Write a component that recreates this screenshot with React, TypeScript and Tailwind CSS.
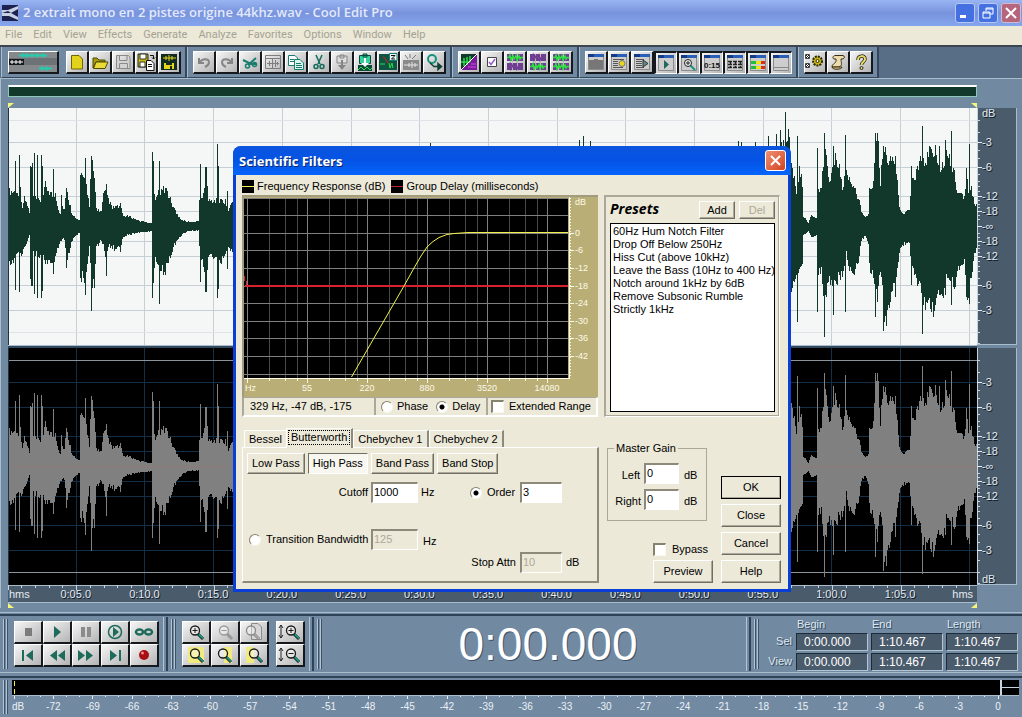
import { useState } from "react";
import type { ReactNode } from "react";
import { twMerge } from "tailwind-merge";

type Point = [number, number, number];

// x, height above the centre, height below the centre
const envelope: Point[] = [
  [0, 2, 2], [1, 36, 37], [5, 36, 36], [8, 33, 27], [12, 38, 30], [14, 20, 28],
  [16, 28, 22], [19, 22, 15], [21, 13, 8], [22, 60, 54], [24, 60, 56], [25, 30, 26],
  [28, 26, 28], [34, 26, 30], [37, 42, 35], [42, 35, 36], [45, 30, 40], [47, 34, 30],
  [50, 17, 22], [52, 14, 15], [54, 20, 12], [56, 18, 15], [58, 36, 33], [60, 30, 30],
  [63, 15, 15], [67, 8, 9], [71, 6, 7], [72, 49, 52], [75, 50, 52], [77, 60, 54],
  [79, 36, 40], [81, 20, 18], [83, 68, 56], [86, 50, 58], [88, 18, 20], [93, 15, 14],
  [95, 32, 20], [98, 36, 32], [100, 28, 20], [104, 18, 20], [107, 20, 25], [112, 20, 20],
  [115, 10, 10], [120, 10, 8], [132, 5, 6], [143, 3, 4], [144, 60, 50], [146, 36, 40],
  [147, 30, 32], [152, 36, 42], [157, 40, 46], [160, 32, 35], [164, 22, 24], [168, 13, 15],
  [174, 6, 7], [181, 4, 4], [190, 5, 4], [191, 25, 20], [192, 40, 45], [194, 26, 30],
  [198, 57, 60], [200, 26, 30], [206, 26, 30], [212, 26, 36], [217, 26, 30], [220, 16, 20],
  [224, 25, 25], [228, 18, 28],
  [260, 40, 44], [330, 12, 14], [345, 50, 50], [420, 45, 50], [500, 20, 22], [560, 60, 58],
  [620, 40, 42], [700, 55, 50], [760, 65, 60], [776, 90, 84], [781, 84, 64],
  [785, 50, 57], [788, 38, 45], [791, 56, 50], [794, 45, 38], [795, 10, 8], [800, 3, 4],
  [803, 11, 11], [808, 8, 8], [809, 40, 48], [813, 38, 45], [816, 80, 80], [818, 75, 75],
  [820, 46, 55], [822, 54, 62], [826, 70, 62], [831, 62, 50], [834, 42, 48], [838, 54, 28],
  [843, 42, 52], [848, 34, 42], [851, 26, 30], [853, 14, 14], [857, 9, 9], [860, 12, 16],
  [861, 38, 42], [865, 42, 50], [867, 92, 70], [870, 80, 60], [872, 44, 46], [874, 78, 60],
  [877, 78, 105], [880, 68, 88], [882, 66, 64], [886, 64, 56], [889, 46, 44], [891, 20, 24],
  [894, 12, 18], [901, 16, 16], [903, 50, 38], [907, 48, 48], [911, 66, 62], [914, 70, 72],
  [917, 70, 80], [921, 75, 78], [926, 80, 86], [929, 72, 70], [931, 56, 62], [935, 64, 66],
  [938, 74, 50], [942, 64, 58], [946, 54, 62], [949, 34, 44], [954, 32, 40], [956, 28, 36],
  [958, 56, 70], [960, 36, 68], [963, 40, 56], [966, 24, 30], [969, 20, 20],
];

const spikes: Point[] = [
  [7, 65, 63], [11, 71, 65], [26, 73, 67], [29, 71, 71], [33, 71, 71], [34, 60, 64],
  [45, 57, 47], [53, 31, 14], [58, 38, 41], [77, 68, 68], [83, 70, 84], [98, 42, 49],
  [112, 23, 25], [144, 74, 71], [145, 65, 56], [151, 65, 77], [192, 62, 55],
  [197, 59, 65], [198, 59, 65], [209, 82, 71], [210, 60, 62], [219, 35, 42],
  [422, 83, 70], [571, 86, 80], [575, 90, 80],
  [582, 85, 75], [730, 85, 80], [733, 84, 80], [747, 84, 80], [760, 90, 80], [768, 92, 80],
  [772, 96, 84], [777, 114, 80], [780, 97, 80], [789, 90, 95], [809, 78, 85], [816, 93, 110],
  [825, 80, 88], [837, 91, 85], [867, 93, 90], [869, 93, 75], [875, 80, 104], [882, 70, 75],
  [887, 70, 70], [903, 60, 58], [914, 100, 107], [931, 80, 68], [937, 86, 68], [943, 95, 78],
  [961, 82, 77],
];

function wavePath() {
  let d = "";
  let seg = 0;
  for (let x = 0; x < 969; x++) {
    while (seg < envelope.length - 2 && envelope[seg + 1][0] <= x) seg++;
    const [x0, u0, l0] = envelope[seg];
    const [x1, u1, l1] = envelope[seg + 1];
    const t = (x - x0) / (x1 - x0);
    const noise = Math.abs(Math.sin(x * 12.9898) * 43758.5453) % 1;
    const noise2 = Math.abs(Math.sin(x * 78.233) * 12543.123) % 1;
    let up = (u0 + (u1 - u0) * t) * (0.84 + noise * 0.24);
    let low = (l0 + (l1 - l0) * t) * (0.84 + noise2 * 0.24);
    const spike = spikes.find((s) => s[0] === x);
    if (spike) {
      up = spike[1];
      low = spike[2];
    }
    d += `M${x + 0.5} ${Math.round(118 - up)}V${Math.round(119 + low)}`;
  }
  return d;
}

const wave = wavePath();
const dbLines = [34, 59, 88, 103, 133, 148, 177, 202];
const dbMarks: [number, string][] = [
  [34, "-3"], [59, "-6"], [88, "-12"], [103, "-18"], [118, "-∞"],
  [133, "-18"], [148, "-12"], [177, "-6"], [202, "-3"],
];
const minorDb = [12, 24, 42, 50, 66, 73, 78, 83, 92, 96, 99, 107, 111, 125, 129, 137, 140, 144, 153, 158, 163, 170, 186, 194, 212, 224, 235];

const Channel = ({ dark }: { dark?: boolean }) => (
  <div className="flex">
    <svg
      viewBox="0 0 969 237"
      preserveAspectRatio="none"
      shapeRendering="crispEdges"
      className={twMerge("h-[237px] min-w-0 flex-1 bg-[#f5f7f7]", dark && "bg-black")}
    >
      <g stroke={dark ? "#122f47" : "#c6cfd5"}>
        {Array.from({ length: 14 }, (_, i) => (
          <path key={i} d={`M${Math.round((i + 1) * 68.7) - 0.5} 0V237`} />
        ))}
        {dbLines.map((y) => (
          <path key={y} d={`M0 ${y + 0.5}H969`} />
        ))}
      </g>
      <path d="M0 12.5H969M0 224.5H969" stroke={dark ? "#8b949c" : "#dde3e6"} />
      <path d={wave} stroke={dark ? "#808080" : "#12372b"} />
      {dark && <path d="M0 118.5H969" stroke="#8c7b79" />}
      <path d="M0.5 0V237" stroke="#1c3444" />
    </svg>
    <svg width="40" height="237" className="border-r border-b border-[#a9bccb] bg-[#4a5b6c]" shapeRendering="crispEdges">
      <path d="M0.5 0V237" stroke="#c6d4df" />
      {minorDb.map((y) => (
        <path key={y} d={`M0 ${y + 0.5}H3`} stroke="#c6d4df" />
      ))}
      <g className="font-['Liberation_Sans'] text-[11px]">
        {dbMarks.map(([y, label]) => (
          <g key={y}>
            <path d={`M0 ${y + 0.5}H5`} stroke="#e6eef4" />
            <text x="6" y={y + 5} fill="#10171e">{label}</text>
            <text x="5" y={y + 4} fill="#e2ebf2">{label}</text>
          </g>
        ))}
        <text x="6" y={dark ? 236 : 10} fill="#10171e">dB</text>
        <text x="5" y={dark ? 235 : 9} fill="#e2ebf2">dB</text>
      </g>
    </svg>
  </div>
);

const Flag = ({ d }: { d: string }) => (
  <svg width="6" height="5" viewBox="0 0 6 5">
    <path d={d} fill="#f6f67a" />
  </svg>
);

const arrowHead = <path d="M5 2V14L12 8Z" fill="#1f6b5b" />;

const grid = (top: string, bottom: string) => (
  <>
    <path d="M0 0H16V7H0ZM0 9H16V16H0Z" fill="#6f3f92" />
    <path d="M0 3.500H16M0 12.500H16M5.500 0V16M10.500 0V16" stroke="#b9b9b9" />
    <path d="M0 3.500H2L3 1L4 6L6 2L7 5L9 1.500L10 6L12 2L13 5L14 3.500H16" fill="none" stroke={top} strokeWidth="1.500" />
    <path d="M0 12.500H2L3 10L4 15L6 11L7 14L9 10.500L10 15L12 11L13 14L14 12.500H16" fill="none" stroke={bottom} strokeWidth="1.500" />
  </>
);

const pane = (content: ReactNode) => (
  <>
    <path d="M0.500 1.500H15.500V15.500H0.500Z" fill="#cdcdcd" stroke="#8b8b8b" />
    <path d="M0 0H16V3H0Z" fill="#2a5fb8" />
    <path d="M0 0H6V3H0Z" fill="#123a86" />
    {content}
  </>
);

const icons: Record<string, ReactNode> = {
  New: <path d="M2.500 1.500H10L13.500 5V15H2.500Z" fill="#e3d21c" stroke="#6f6600" />,
  Open: (
    <>
      <path d="M1 4H5L7 6H13V8H4L1 14Z" fill="#a89a10" stroke="#4f4a00" />
      <path d="M4 8H16L13 14.500H1.500Z" fill="#eadb38" stroke="#4f4a00" />
    </>
  ),
  Save: (
    <path d="M1.500 1.500H13.500L15 3V14.500H1.500ZM4.500 1.500V6.500H12V1.500M4.500 14.500V9.500H12.500V14.500" fill="#d3d3d3" stroke="#8a8a8a" />
  ),
  "Save As": (
    <>
      <path d="M0 0H10V13H0Z" fill="#c9bb14" stroke="#222" />
      <path d="M2 0H8V5H2ZM2 8H7V13H2Z" fill="#fff" stroke="#333" />
      <path d="M8.500 6.500H13L16 9.500V16.500H8.500Z" fill="#fff" stroke="#111" />
      <path d="M10 10.500H14M10 12.500H14M12 1.500H15.500V5M14 3.500L15.500 5L17 3.500" fill="none" stroke="#111" />
    </>
  ),
  "Save Selection": (
    <>
      <path d="M0 0H16V16H0Z" fill="#132c22" />
      <path d="M2 4H15M5 2V6M8 1V7M11 2V6" stroke="#e6d61e" />
      <path d="M3 9H13V15H3Z" fill="#e6d61e" />
      <path d="M5 9H11V11H5ZM9 12H11V15H9Z" fill="#132c22" />
    </>
  ),
  Undo: <path d="M3 4V9H8M3.500 8.500C6 4 13 4 13 8.500C13 11 11 12 9 13" fill="none" stroke="#858585" strokeWidth="2" />,
  Redo: <path d="M13 4V9H8M12.500 8.500C10 4 3 4 3 8.500C3 11 5 12 7 13" fill="none" stroke="#858585" strokeWidth="2" />,
  Trim: (
    <g fill="none" stroke="#187d6c" strokeWidth="1.500">
      <path d="M1 6L9 10H14M14 4L6 11" strokeWidth="2" />
      <circle cx="12.500" cy="10.500" r="2" />
      <circle cx="5.500" cy="12" r="2" />
    </g>
  ),
  "Adjust Sample": (
    <path d="M0.500 1.500H15.500V14.500H0.500ZM0 4.500H16M2 9.500H14M4.500 7V12M7.500 5V14M10.500 6V13M12.500 8V11" fill="none" stroke="#7d7d7d" />
  ),
  Copy: (
    <>
      <path d="M0.500 1.500H7L9.500 4V11.500H0.500Z" fill="#fff" stroke="#187d6c" />
      <path d="M6.500 5.500H12L15.500 9V15.500H6.500Z" fill="#dff3ee" stroke="#187d6c" />
      <path d="M2 5.500H6M2 7.500H6M8 9.500H13M8 11.500H14M8 13.500H14" stroke="#187d6c" />
    </>
  ),
  Cut: (
    <g fill="none" stroke="#14695a" strokeWidth="1.500">
      <path d="M5 1L9 10M11 1L7 10" />
      <circle cx="5" cy="12.500" r="2" />
      <circle cx="11" cy="12.500" r="2" />
    </g>
  ),
  Paste: (
    <>
      <path d="M3 2H13V9H3ZM6 1H10V4H6Z" fill="#ddd" stroke="#858585" />
      <path d="M7 6H9V11H12L8 16L4 11H7Z" fill="#858585" />
    </>
  ),
  "Mix Paste": (
    <>
      <path d="M2.500 1.500H13.500V9.500H2.500ZM6 0H10V3H6Z" fill="#35d39b" stroke="#0b4b3c" />
      <path d="M1 11H15V17H1Z" fill="#0b4b3c" />
      <path d="M7 4H9V9H12L8 13L4 9H7Z" fill="#fff" />
      <path d="M1 16L4 13L7 16L10 13L13 16L15 14" stroke="#2bdc4f" fill="none" />
    </>
  ),
  "Zero Cross": (
    <>
      <path d="M-1 0H17V16H-1Z" fill="#0f5541" />
      <path d="M9.500 -0.500H17V6.500H9.500Z" fill="#e9f5f3" stroke="#187d6c" />
      <path d="M11 1.500H15L11.500 5H15" stroke="#111" fill="none" />
      <path d="M0 10H5M9 9L10 14L12 9L13 14" stroke="#26e04a" fill="none" />
      <path d="M3 3C6 3 6 9 9 9" stroke="#e02222" fill="none" />
    </>
  ),
  Delete: (
    <>
      <path d="M0 6H16V16H0Z" fill="#8a8a8a" />
      <path d="M1 11H15M6 9V13M9 8V14M12 9V13" stroke="#e5e5e5" />
      <path d="M5 5L2 1M7 4V0M9 5L13 1" stroke="#777" />
    </>
  ),
  Quick: (
    <>
      <circle cx="6" cy="5" r="4" fill="none" stroke="#18927c" strokeWidth="2" />
      <path d="M4 9L8 12.500M7 12.500H14M12 9.500L15.500 12.500L12 15.500Z" stroke="#143f36" strokeWidth="1.500" fill="#143f36" />
    </>
  ),
  Spectral: (
    <>
      <path d="M0 0H16V16H0Z" fill="#7a1c9a" />
      <path d="M0 0H16L0 16Z" fill="#123a2c" />
      <path d="M0 8H9M3 4V12M6 3V11M9 2V8" stroke="#2be04a" strokeWidth="1.500" />
      <path d="M0 16L16 0" stroke="#fff" />
      <path d="M7 13H15M10 10H15" stroke="#d64be6" />
    </>
  ),
  Check: (
    <>
      <path d="M3.500 3.500H12.500V12.500H3.500Z" fill="#fff" stroke="#444" />
      <path d="M5 8L7 10.500L11 5" fill="none" stroke="#9a5ad0" strokeWidth="1.500" />
    </>
  ),
  "Edit Both": grid("#27e03c", "#6f3f92"),
  "Edit Left": grid("#6f3f92", "#27e03c"),
  "Edit Right": grid("#27e03c", "#27e03c"),
  Organizer: pane(<path d="M1 6H6V5H10V6H15V15H1Z" fill="#777" />),
  "Cue List": pane(
    <>
      <path d="M2 5.500H13M2 7.500H7M2 9.500H7M2 11.500H7M2 13.500H12" stroke="#555" />
      <circle cx="11" cy="9.500" r="3" fill="#e6d61e" stroke="#777" />
    </>,
  ),
  "Play List": pane(
    <>
      <path d="M2 5.500H10M2 7.500H8M2 9.500H8M2 11.500H8M2 13.500H10" stroke="#555" />
      <path d="M9 6V13L14 9.500Z" fill="#5e8f8b" stroke="#333" />
    </>,
  ),
  Transport: pane(<path d="M6 5V14L11 9.500Z" fill="#1f6b5b" />),
  "Zoom Bar": pane(
    <>
      <path d="M9 10L14 15" stroke="#18927c" strokeWidth="2" />
      <circle cx="7" cy="8" r="3.500" fill="#eee" stroke="#222" />
      <path d="M5 8H9M7 6V10" stroke="#222" />
    </>,
  ),
  "Time Window": pane(
    <text x="8" y="13" textAnchor="middle" fontSize="8" fontWeight="700" fill="#111">0:15</text>,
  ),
  "Selection Window": pane(
    <path d="M1 6.500H15M1 9.500H15M1 12.500H15M3.500 6V13M8.500 6V13M13.500 6V13" fill="none" stroke="#222" strokeWidth="1.500" strokeDasharray="4 1" />,
  ),
  "Level Window": pane(
    <>
      <path d="M1 6H6V9H1ZM1 11H6V14H1Z" fill="#1ebf3b" />
      <path d="M6 6H11V9H6ZM6 11H11V14H6Z" fill="#efe21a" />
      <path d="M11 6H15V9H11ZM11 11H15V14H11Z" fill="#e02b1c" />
    </>,
  ),
  "Status Bar": pane(<path d="M0 12.500H16" stroke="#888" />),
  Settings: (
    <>
      <path d="M-1.500 0.500H2.500V4.500H-1.500ZM-1.500 9.500H2.500V13.500H-1.500Z" fill="#fff" stroke="#444" />
      <path d="M-1 1L2 4M2 1L-1 4M-1 10L2 13M2 10L-1 13" stroke="#222" />
      <circle cx="10.500" cy="7" r="4.500" fill="#c9b714" stroke="#2a2600" strokeDasharray="2 1" strokeWidth="2" />
      <circle cx="10.500" cy="7" r="1.500" fill="#fff" stroke="#2a2600" />
    </>
  ),
  Script: (
    <>
      <path d="M5 1.500H13C15 2 15 5 12 5H11C11 9 13 11 9 13H2C2 9 7 10 6 5H4C2 4 3 2 5 1.500Z" fill="#ecdcae" stroke="#3a3018" />
      <path d="M2 13C2 16 12 16 12 13Z" fill="#d6c07c" stroke="#3a3018" />
    </>
  ),
  Help: (
    <>
      <path d="M5 6C5 1 12 1 12 5C12 8 8.500 8 8.500 11" fill="none" stroke="#222" strokeWidth="3.500" />
      <path d="M5 6C5 1 12 1 12 5C12 8 8.500 8 8.500 11" fill="none" stroke="#e8dc66" strokeWidth="2" />
      <circle cx="8.500" cy="14" r="1.500" fill="#e8dc66" stroke="#222" />
    </>
  ),
  Stop: <path d="M5 4H12V12H5Z" fill="#7b7b7b" />,
  Play: arrowHead,
  Pause: <path d="M3 3H7V13H3ZM9 3H13V13H9Z" fill="#8b8b8b" />,
  "Play to End": (
    <>
      <circle cx="8" cy="8" r="6.500" fill="none" stroke="#1f6b5b" strokeWidth="1.500" />
      <path d="M6 3V13L12 8Z" fill="#1f6b5b" />
    </>
  ),
  Loop: (
    <g fill="none" stroke="#1f6b5b" strokeWidth="2.500">
      <ellipse cx="3.500" cy="8" rx="3.500" ry="2.500" />
      <ellipse cx="12.500" cy="8" rx="3.500" ry="2.500" />
    </g>
  ),
  "Go to Start": <path d="M2 3H4V14H2ZM13 3V14L6 8.500Z" fill="#1f6b5b" />,
  Rewind: <path d="M8 3V14L1 8.500ZM16 3V14L9 8.500Z" fill="#1f6b5b" />,
  Forward: <path d="M0 3V14L7 8.500ZM8 3V14L15 8.500Z" fill="#1f6b5b" />,
  "Go to End": <path d="M12 3H14V14H12ZM3 3V14L10 8.500Z" fill="#1f6b5b" />,
  Record: (
    <>
      <circle cx="8" cy="8" r="5" fill="#a80f12" />
      <circle cx="6.500" cy="6" r="1.500" fill="#f08a8a" />
    </>
  ),
};

const lens = (sign: string, ink = "#1a1a1a", handle = "#18927c", shift = 0) => (
  <g transform={`translate(${shift} 0)`}>
    <path d="M10 10L15 15" stroke={ink} strokeWidth="3" />
    <path d="M10.500 10L15 14.500" stroke={handle} strokeWidth="2" />
    <circle cx="7" cy="6.500" r="4.500" fill="#ffffff66" stroke={ink} strokeWidth="1.300" />
    <path d={sign} stroke={ink} fill="none" />
  </g>
);

const plus = "M4.500 6.500H9.500M7 4V9";
const minus = "M4.500 6.500H9.500";
const upDown = <path d="M-1 1V14M-3 4L-1 1L1 4M-3 11L-1 14L1 11" stroke="#222" fill="none" />;

Object.assign(icons, {
  "Zoom In": lens(plus),
  "Zoom Out": lens(minus, "#9a9a9a", "#9a9a9a"),
  "Zoom Full": (
    <>
      <path d="M5.500 -0.500H12L15.500 3V15.500H5.500Z" fill="#d6d6d6" stroke="#8a8a8a" />
      {lens("", "#8a8a8a", "#a5a5a5", -2)}
    </>
  ),
  "Zoom Selection": (
    <>
      <path d="M0 0H16V16H0Z" fill="#f0ea80" />
      {lens("")}
    </>
  ),
  "Zoom Left": (
    <>
      <path d="M7 0H15V16H7Z" fill="#f0ea80" />
      {lens("", "#1a1a1a", "#18927c", -1)}
    </>
  ),
  "Zoom Right": (
    <>
      <path d="M0 0H8V16H0Z" fill="#f0ea80" />
      {lens("", "#1a1a1a", "#18927c", 1)}
    </>
  ),
  "Zoom In Vertically": (
    <>
      {upDown}
      {lens(plus, "#1a1a1a", "#18927c", 2)}
    </>
  ),
  "Zoom Out Vertically": (
    <>
      {upDown}
      {lens(minus, "#1a1a1a", "#18927c", 2)}
    </>
  ),
});

const IconButton = ({ name, wide, pressed }: { name: string; wide?: boolean; pressed?: boolean }) => (
  <button
    type="button"
    aria-label={name}
    className={twMerge(
      "flex h-[23px] w-[23px] items-center justify-center border-t border-l border-r-2 border-b-2 border-t-white border-l-white border-r-[#15191d] border-b-[#15191d] bg-linear-to-br from-[#f6f6f6] to-[#b4b4b4]",
      wide && "w-[29px]",
      pressed && "border-t-2 border-l-2 border-r border-b border-t-[#15191d] border-l-[#15191d] border-r-white border-b-white",
    )}
  >
    <svg width="16" height="16" viewBox="0 0 16 16" className="overflow-visible">
      {icons[name]}
    </svg>
  </button>
);

const toolGroup =
  "flex h-[31px] items-end border-r-2 border-b border-l border-r-[#33485c] border-b-[#33485c] border-l-[#a9bccb] bg-[#7289a2] pr-[4px] pb-[3px] pl-[5px]";

const ToolGroup = ({ names, pressedFrom = 99 }: { names: string[]; pressedFrom?: number }) => (
  <div className={toolGroup}>
    {names.map((name, i) => (
      <IconButton key={name} name={name} pressed={i >= pressedFrom} />
    ))}
  </div>
);

const toolbar = [
  { names: ["Undo", "Redo", "Trim", "Adjust Sample", "Copy", "Cut", "Paste", "Mix Paste", "Zero Cross", "Delete", "Quick"] },
  { names: ["Spectral", "Check", "Edit Both", "Edit Left", "Edit Right"] },
  { names: ["Organizer", "Cue List", "Play List", "Transport", "Zoom Bar", "Time Window", "Selection Window", "Level Window", "Status Bar"], pressedFrom: 3 },
  { names: ["Settings", "Script", "Help"] },
];

const menus = ["File", "Edit", "View", "Effects", "Generate", "Analyze", "Favorites", "Options", "Window", "Help"];

const Grip = () => (
  <div className="flex h-[50px] gap-px">
    <div className="w-[2px] border-r border-[#3d5268] bg-[#b3c4d2]" />
    <div className="w-[2px] border-r border-[#3d5268] bg-[#b3c4d2]" />
  </div>
);

const EndBar = () => (
  <div className="h-[54px] w-[5px] border-r-2 border-l border-r-[#2f4358] border-l-[#b3c4d2] bg-[#7289a2]" />
);

const bevel =
  "border border-t-white border-l-white border-r-[#716f64] border-b-[#716f64] bg-[#ece9d8] shadow-[inset_-1px_-1px_0_#aca899]";

const DialogButton = ({ children, className, disabled }: { children: string; className?: string; disabled?: boolean }) => (
  <button
    type="button"
    disabled={disabled}
    className={twMerge(bevel, "h-[23px] w-[60px] text-center disabled:text-[#aca899]", className)}
  >
    {children}
  </button>
);

const Field = ({ id, value, disabled, className }: { id: string; value: string; disabled?: boolean; className?: string }) => (
  <input
    id={id}
    defaultValue={value}
    disabled={disabled}
    className={twMerge(
      "h-[21px] w-[42px] border-t-2 border-l-2 border-r border-b border-t-[#8d8a7c] border-l-[#8d8a7c] border-r-white border-b-white bg-white pb-[2px] pl-px outline-none disabled:bg-[#ece9d8] disabled:text-[#aca899]",
      className,
    )}
  />
);

const radio =
  "size-[12px] shrink-0 appearance-none rounded-full border border-t-[#85826f] border-l-[#85826f] border-r-[#f8f7f0] border-b-[#f8f7f0] bg-white checked:bg-[radial-gradient(circle,#000_0_2px,#fff_3px)]";
const checkbox =
  "size-[13px] shrink-0 appearance-none border-t-2 border-l-2 border-r border-b border-t-[#85826f] border-l-[#85826f] border-r-[#f8f7f0] border-b-[#f8f7f0] bg-white checked:bg-black";

const majorY: [number, string][] = [
  [38, "0"], [55, "-6"], [73, "-12"], [91, "-18"], [108, "-24"], [126, "-30"], [143, "-36"], [161, "-42"],
];
const majorX: [number, string][] = [
  [5, ""], [65, "55"], [125, "220"], [185, "880"], [245, "3520"], [305, "14080"],
];

const ResponseChart = () => (
  <svg viewBox="0 0 356 202" className="block w-full bg-[#b9ae76]" shapeRendering="crispEdges">
    <path d="M0 1H356M1 0V202" stroke="#a19b80" strokeWidth="2" />
    <path d="M2 3H326V183H2Z" fill="#000" />
    {majorX.map(([x]) =>
      [22, 38, 50].filter((o) => x + o < 326).map((o) => (
        <path key={x + o} d={`M${x + o + 0.5} 3V183`} stroke="#484848" />
      )),
    )}
    <g stroke="#808080">
      <path d="M2 3.500H326M2 20.500H326M2 179.500H326" />
      {majorY.map(([y]) => (
        <path key={y} d={`M2 ${y + 0.5}H326`} />
      ))}
      {majorX.map(([x]) => (
        <path key={x} d={`M${x + 0.5} 3V183`} />
      ))}
    </g>
    <path d="M3 91H326" stroke="#d8202e" strokeWidth="2" />
    <path d="M2.500 81V86M4.500 86V91" stroke="#d8202e" />
    <path
      d="M109.500 182L162 91L172 73L179 61L185 52L191 46.500L197 42.500L205 39.500L212 38.500L226 37.500H326"
      fill="none"
      stroke="#f2f24a"
      shapeRendering="auto"
    />
    <path d="M2 183.500H327.500V2" fill="none" stroke="#fbf8e6" />
    {Array.from({ length: 60 }, (_, i) => (
      <path key={i} d={`M328 ${i * 3 + 3.5}H329`} stroke="#fbf8e6" />
    ))}
    <g fill="#fdfae8" className="font-['Liberation_Sans'] text-[9px]">
      <text x="333" y="10">dB</text>
      {majorY.map(([y, label]) => (
        <g key={y}>
          <path d={`M328 ${y + 0.5}H332`} stroke="#fbf8e6" />
          <text x="333" y={y + 3}>{label}</text>
        </g>
      ))}
      <text x="3" y="196">Hz</text>
      {majorX.map(([x, label]) => (
        <g key={x}>
          <path d={`M${x + 0.5} 184V188`} stroke="#fbf8e6" />
          <text x={x} y="196" textAnchor="middle">{label}</text>
        </g>
      ))}
      {majorX.map(([x]) =>
        [22, 38, 50].filter((o) => x + o < 326).map((o) => (
          <path key={x + o} d={`M${x + o + 0.5} 184V186`} stroke="#fbf8e6" />
        )),
      )}
    </g>
  </svg>
);

const presets = [
  "60Hz Hum Notch Filter",
  "Drop Off Below 250Hz",
  "Hiss Cut (above 10kHz)",
  "Leave the Bass (10Hz to 400 Hz)",
  "Notch around 1kHz by 6dB",
  "Remove Subsonic Rumble",
  "Strictly 1kHz",
];

const Swatch = ({ line }: { line: string }) => (
  <svg width="12" height="13" shapeRendering="crispEdges">
    <path d="M0 0H12V13H0Z" />
    <path d="M0 6.500H12" stroke={line} />
  </svg>
);

const tabs = ["Bessel", "Butterworth", "Chebychev 1", "Chebychev 2"];
const passes = ["Low Pass", "High Pass", "Band Pass", "Band Stop"];

const ScientificFilters = () => {
  const [tab, setTab] = useState("Butterworth");
  const [pass, setPass] = useState("High Pass");

  return (
    <section
      role="dialog"
      aria-label="Scientific Filters"
      className="absolute top-[146px] left-[233px] w-[558px] rounded-t-lg border-3 border-t-0 border-[#0a3fd6] bg-[#ece9d8] pb-[6px] text-[11px] leading-[13px] text-black"
    >
      <header className="-mx-[3px] flex h-[29px] items-center justify-between rounded-t-lg bg-linear-to-b from-[#0a55de] via-[#0553e6] to-[#0565fb] pr-[5px] pl-[6px]">
        <h2 className="pt-[2px] font-['Open_Sans'] text-[13px] font-bold text-white [text-shadow:1px_1px_0_#0a246a]">
          Scientific Filters
        </h2>
        <button type="button" aria-label="Close window" className="flex size-[21px] items-center justify-center rounded-[3px] border border-white bg-linear-to-br from-[#ee9072] to-[#d2401a]">
          <svg width="11" height="11" viewBox="0 0 11 11">
            <path d="M1 1L10 10M10 1L1 10" stroke="#fff" strokeWidth="2" />
          </svg>
        </button>
      </header>

      <div className="flex items-end gap-[6px] pt-[5px] pr-[8px] pl-[6px]">
        <div className="w-[356px]">
          <div className="flex items-center gap-[3px] pb-[2px]">
            <Swatch line="#f2f24a" />
            <span className="mr-[3px]">Frequency Response (dB)</span>
            <Swatch line="#c02028" />
            <span>Group Delay (milliseconds)</span>
          </div>
          <ResponseChart />
          <div className="flex h-[20px] border-2 border-t border-[#aca899] border-r-white border-b-white">
            <span className="flex w-[132px] items-center border-r-2 border-[#aca899] pl-[6px]">329 Hz, -47 dB, -175</span>
            <div className="flex flex-1 items-center gap-[4px] pl-[5px]">
              <input id="phase" type="radio" name="view" className={radio} />
              <label htmlFor="phase" className="mr-[4px]">Phase</label>
              <input id="delay" type="radio" name="view" defaultChecked className={radio} />
              <label htmlFor="delay">Delay</label>
            </div>
            <div className="flex w-[110px] items-center gap-[5px] border-l-2 border-[#aca899] pl-[3px] whitespace-nowrap">
              <input id="range" type="checkbox" className={checkbox} />
              <label htmlFor="range">Extended Range</label>
            </div>
          </div>
        </div>

        <div className="flex h-[222px] flex-1 flex-col border border-t-2 border-l-2 border-[#aca899] border-r-white border-b-white p-[4px] shadow-[inset_-1px_-1px_0_#aca899]">
          <div className="flex h-[22px] items-start gap-[4px]">
            <label htmlFor="presets" className="flex-1 pt-px font-['Open_Sans'] text-[14px] font-bold italic">Presets</label>
            <DialogButton className="h-[18px] w-[36px]">Add</DialogButton>
            <DialogButton className="h-[18px] w-[36px]" disabled>Del</DialogButton>
          </div>
          <select id="presets" size={14} className="w-full flex-1 appearance-none overflow-hidden border border-black bg-white pt-px">
            {presets.map((name) => (
              <option key={name} className="min-h-[13px] px-[2px] py-0 leading-[13px]">{name}</option>
            ))}
          </select>
        </div>
      </div>

      <div className="flex items-stretch justify-between pt-[11px] pr-[7px] pl-[6px]">
        <div className="w-[357px]">
          <div role="tablist" className="flex h-[19px] items-end pl-[2px]">
            {tabs.map((name) => (
              <button
                key={name}
                type="button"
                role="tab"
                aria-selected={tab === name}
                onClick={() => setTab(name)}
                className={twMerge(
                  "h-[17px] border-t border-r-2 border-l border-t-white border-r-[#8d8a7c] border-l-white px-[4px] whitespace-nowrap first:border-r-0",
                  tab === name && "relative -mb-px h-[20px] bg-[#ece9d8] px-px pb-[2px]",
                )}
              >
                <span className={twMerge("block", tab === name && "border border-dotted border-black px-[2px]")}>{name}</span>
              </button>
            ))}
          </div>
          <div className="h-[136px] border border-t-white border-r-2 border-b-2 border-l-white border-r-[#8d8a7c] border-b-[#8d8a7c] px-[4px] pt-[5px]">
            <div className="flex gap-[3px]">
              {passes.map((name) => (
                <button
                  key={name}
                  type="button"
                  aria-pressed={pass === name}
                  onClick={() => setPass(name)}
                  className={twMerge(
                    bevel,
                    "h-[21px] px-[4px] whitespace-nowrap",
                    pass === name && "border-t-[#716f64] border-l-[#716f64] border-r-white border-b-white bg-[#f7f6ef] shadow-none",
                  )}
                >
                  {name}
                </button>
              ))}
            </div>
            <div className="mt-[8px] flex items-center">
              <label htmlFor="cutoff" className="w-[124px] pr-[3px] text-right">Cutoff</label>
              <Field id="cutoff" value="1000" className="w-[47px]" />
              <span className="w-[52px] pl-[3px]">Hz</span>
              <input id="order-mode" type="radio" name="mode" defaultChecked aria-label="Use order" className={radio} />
              <label htmlFor="order" className="flex-1 pl-[5px]">Order</label>
              <Field id="order" value="3" className="mr-[31px]" />
            </div>
            <div className="mt-[26px] flex items-center">
              <input id="bandwidth-mode" type="radio" name="mode" className={twMerge(radio, "ml-[2px]")} aria-label="Use transition bandwidth" />
              <label htmlFor="bandwidth" className="w-[110px] pl-[5px] whitespace-nowrap">Transition Bandwidth</label>
              <Field id="bandwidth" value="125" disabled className="w-[47px]" />
              <span className="pt-[4px] pl-[5px]">Hz</span>
            </div>
            <div className="mt-[2px] flex items-center justify-end">
              <label htmlFor="attn" className="pr-[4px]">Stop Attn</label>
              <Field id="attn" value="10" disabled />
              <span className="w-[31px] pl-[4px]">dB</span>
            </div>
          </div>
        </div>

        <div className="flex w-[106px] flex-col pt-[14px]">
          <fieldset className="h-[79px] w-[100px] border border-[#aca899] px-[6px]">
            <legend className="px-[2px]">Master Gain</legend>
            <div className="grid grid-cols-[30px_35px_1fr] items-center gap-y-[5px] pt-[8px]">
              <label htmlFor="left" className="pt-[4px] pr-[4px] text-right">Left</label>
              <Field id="left" value="0" className="w-[35px]" />
              <span className="pt-[4px] pl-[5px]">dB</span>
              <label htmlFor="right" className="pt-[4px] pr-[3px] text-right">Right</label>
              <Field id="right" value="0" className="w-[35px]" />
              <span className="pt-[4px] pl-[5px]">dB</span>
            </div>
          </fieldset>
          <div className="mt-auto flex flex-col gap-[4px] self-end">
            <div className="flex items-center gap-[6px]">
              <input id="bypass" type="checkbox" className={checkbox} />
              <label htmlFor="bypass">Bypass</label>
            </div>
            <DialogButton>Preview</DialogButton>
          </div>
        </div>

        <div className="flex flex-col justify-end gap-[5px]">
          <DialogButton className="outline outline-black -outline-offset-1">OK</DialogButton>
          <DialogButton>Close</DialogButton>
          <DialogButton>Cancel</DialogButton>
          <DialogButton>Help</DialogButton>
        </div>
      </div>
    </section>
  );
};

const TimeRuler = () => (
  <svg className="block h-[18px] w-full border-b border-[#a9bccb] bg-[#4a5b6c] font-['Liberation_Sans'] text-[11px]" shapeRendering="crispEdges">
    <path d="M0 0.500H2000" stroke="#a9bccb" />
    {Array.from({ length: 71 }, (_, i) => (
      <line key={i} x1={`${i * 1.418}%`} x2={`${i * 1.418}%`} y1="0" y2={i % 5 ? 3 : 5} stroke="#c6d4df" />
    ))}
    {Array.from({ length: 13 }, (_, i) => {
      const seconds = (i + 1) * 5;
      const label = `${Math.floor(seconds / 60)}:${String(seconds % 60).padStart(2, "0")}.0`;
      return (
        <g key={i} textAnchor="middle">
          <text x={`${(i + 1) * 7.09}%`} y="14" fill="#10171e">{label}</text>
          <text x={`${(i + 1) * 7.09 - 0.1}%`} y="13" fill="#e2ebf2">{label}</text>
        </g>
      );
    })}
    <text x="1" y="13" fill="#e2ebf2">hms</text>
    <text x="99.600%" y="13" textAnchor="end" fill="#e2ebf2">hms</text>
  </svg>
);

const LevelMeter = () => (
  <footer className="flex gap-[4px] border-t-2 border-[#2f4358] bg-[#7289a2] pt-[2px] pr-[3px] pl-[3px]">
    <div className="flex h-[34px] gap-px">
      <div className="w-[2px] border-r border-[#3d5268] bg-[#b3c4d2]" />
      <div className="w-[2px] border-r border-[#3d5268] bg-[#b3c4d2]" />
    </div>
    <svg className="h-[36px] min-w-0 flex-1 font-['Liberation_Sans'] text-[10px]" shapeRendering="crispEdges">
      <rect width="100%" height="15" fill="#000" />
      <path d="M2.500 1V6M2.500 9V14" stroke="#f0f03c" />
      <path d="M0 15.500H2000" stroke="#a9bccb" />
      <line x1="98.200%" x2="98.200%" y1="0" y2="15" stroke="#c6d4df" strokeWidth="2" />
      <line x1="98.200%" x2="100%" y1="7.500" y2="7.500" stroke="#c6d4df" />
      {Array.from({ length: 76 }, (_, i) => (
        <line key={i} x1={`${0.2 + i * 1.303}%`} x2={`${0.2 + i * 1.303}%`} y1="16" y2={i % 3 ? 17 : 19} stroke="#e2ebf2" />
      ))}
      <g fill="#eaf1f6">
        <text x="0" y="30">dB</text>
        {Array.from({ length: 25 }, (_, i) => (
          <text key={i} x={`${4.1 + i * 3.909}%`} y="30" textAnchor="middle">{i === 24 ? "0" : i * 3 - 72}</text>
        ))}
      </g>
    </svg>
  </footer>
);

const selection = [
  { label: "Sel", values: ["0:00.000", "1:10.467", "1:10.467"] },
  { label: "View", values: ["0:00.000", "1:10.467", "1:10.467"] },
];

export default function App() {
  return (
    <div className="relative flex min-h-screen flex-col overflow-hidden bg-[#7289a2] font-['Liberation_Sans',sans-serif] text-[11px]">
      <header className="flex h-[26px] items-center bg-linear-to-b from-[#9ab5f2] via-[#7893dc] to-[#84a6ee] pr-px pl-[2px]">
        <svg width="16" height="16" viewBox="0 0 16 16">
          <path d="M0 0H16V16H0Z" fill="#1d2350" />
          <path d="M0 5H6L16 1V4L9 8L16 12V15L7 11H0Z" fill="#c8d0e4" />
          <path d="M0 8H9L6 6Z" fill="#1d2350" />
        </svg>
        <h1 className="flex-1 pl-[5px] font-['Open_Sans'] text-[13px] font-semibold text-[#e2e9fb]">
          2 extrait mono en 2 pistes origine 44khz.wav - Cool Edit Pro
        </h1>
        <div className="flex gap-[3px]">
          <button type="button" aria-label="Minimize" className="size-[20px] rounded-[3px] border border-[#b8c8f4] bg-[#4470e2]">
            <svg viewBox="0 0 18 18"><path d="M4 11H10V14H4Z" fill="#fff" /></svg>
          </button>
          <button type="button" aria-label="Restore" className="size-[20px] rounded-[3px] border border-[#b8c8f4] bg-[#4470e2]">
            <svg viewBox="0 0 18 18"><path d="M7 4H14V10M7 4V7M4 8H11V14H4ZM4 9H11M7 5H14M11 10H14" fill="none" stroke="#fff" /></svg>
          </button>
          <button type="button" aria-label="Close" className="size-[20px] rounded-[3px] border border-[#d3b9cc] bg-[#b5667c]">
            <svg viewBox="0 0 18 18"><path d="M4 4L14 14M14 4L4 14" stroke="#fff" strokeWidth="2" /></svg>
          </button>
        </div>
      </header>

      <nav className="flex h-[21px] items-center gap-[11px] border-b-2 border-[#3d4650] bg-[#ece9d8] pl-[5px] font-['Roboto'] text-[11px] text-[#a5a294]">
        {menus.map((name) => (
          <button key={name} type="button">{name}</button>
        ))}
      </nav>

      <div className="flex h-[32px] border-b border-[#a9bccb] bg-[#586d86] pl-px">
        <div className={twMerge(toolGroup, "gap-[7px] pl-[6px]")}>
          <button type="button" aria-label="Multitrack View" className="h-[23px] w-[51px] border border-r-2 border-b-2 border-t-white border-l-white border-r-[#15191d] border-b-[#15191d] bg-[#6d7276]">
            <svg width="48" height="20" viewBox="0 0 48 20">
              <path d="M0 0H48V6H0ZM0 13H48V20H0Z" fill="#85898c" />
              <path d="M0 7H15V13H0Z" fill="#15191d" />
              <path d="M10 3.500H38M30 16.500H43" stroke="#20cfae" strokeWidth="2" />
              <path d="M14 1V6M18 1V6M23 1V6M28 1V6M34 1V6M33 14V19M38 14V19" stroke="#20cfae" />
              <path d="M1 10H14M3 8V12M7 8V12M11 8V12" stroke="#fff" />
            </svg>
          </button>
          <div className="flex">
            {["New", "Open", "Save", "Save As", "Save Selection"].map((name) => (
              <IconButton key={name} name={name} />
            ))}
          </div>
        </div>
        {toolbar.map((group, i) => (
          <ToolGroup key={i} {...group} />
        ))}
      </div>

      <main className="border-l border-[#a9bccb] pt-[6px] pr-[5px] pl-[7px]">
        <div className="mr-[40px]">
          <div className="h-[12px] border border-t-2 border-[#8fc7b8] border-t-white bg-[#12372b]" />
          <div className="mt-[6px] flex justify-between">
            <Flag d="M0 0H6L0 5Z" />
            <Flag d="M0 0H6V5Z" />
          </div>
        </div>
        <Channel />
        <div className="mr-[40px] h-[3px] border-t border-[#a9bccb] bg-[#33485c]" />
        <Channel dark />
        <div className="mr-[40px]">
          <TimeRuler />
          <div className="flex justify-between">
            <Flag d="M0 0L6 5H0Z" />
            <Flag d="M6 0V5H0Z" />
          </div>
        </div>
      </main>

      <div className="mt-[4px] h-[4px] border-t border-b-2 border-t-[#a9bccb] border-b-[#2f4358]" />

      <section className="flex h-[57px] items-center border-b border-[#a9bccb] pl-[3px]">
        <Grip />
        <div className="ml-[6px] grid grid-cols-5">
          {["Stop", "Play", "Pause", "Play to End", "Loop", "Go to Start", "Rewind", "Forward", "Go to End", "Record"].map((name) => (
            <IconButton key={name} name={name} wide />
          ))}
        </div>
        <div className="ml-[4px] flex items-center gap-[3px]">
          <EndBar />
          <Grip />
        </div>
        <div className="ml-[6px] grid grid-cols-3">
          {["Zoom In", "Zoom Out", "Zoom Full", "Zoom Selection", "Zoom Left", "Zoom Right"].map((name) => (
            <IconButton key={name} name={name} wide />
          ))}
        </div>
        <div className="ml-[7px] grid">
          <IconButton name="Zoom In Vertically" wide />
          <IconButton name="Zoom Out Vertically" wide />
        </div>
        <div className="ml-[4px] flex items-center gap-[3px]">
          <EndBar />
          <Grip />
        </div>
        <div className="flex-1 pl-[28px] text-center text-[46px] leading-[54px] text-white [text-shadow:1px_1px_0_#3d5268]">0:00.000</div>
        <div className="flex items-center gap-[3px]">
          <EndBar />
          <Grip />
        </div>
        <table className="mr-[4px] text-[#dfe8ef]">
          <thead>
            <tr className="h-[15px] leading-[13px] [text-shadow:1px_1px_0_#33485c]">
              <th />
              {["Begin", "End", "Length"].map((name) => (
                <th key={name} className="p-0 pl-[4px] text-left font-normal">{name}</th>
              ))}
            </tr>
          </thead>
          <tbody>
            {selection.map((row) => (
              <tr key={row.label} className="h-[20px]">
                <th className="w-[34px] p-0 pr-px text-right font-normal [text-shadow:1px_1px_0_#33485c]">{row.label}</th>
                {row.values.map((value, i) => (
                  <td key={i} className="p-0 pl-[3px]">
                    <input
                      aria-label={row.label}
                      defaultValue={value}
                      className="block h-[18px] w-[72px] border border-t-[#1c2b3a] border-l-[#1c2b3a] border-r-[#b3c4d2] border-b-[#b3c4d2] bg-[#4a5b6c] pl-[7px] text-[12px] text-white outline-none"
                    />
                  </td>
                ))}
              </tr>
            ))}
          </tbody>
        </table>
      </section>
      <div className="h-[3px]" />
      <LevelMeter />

      <ScientificFilters />
    </div>
  );
}
